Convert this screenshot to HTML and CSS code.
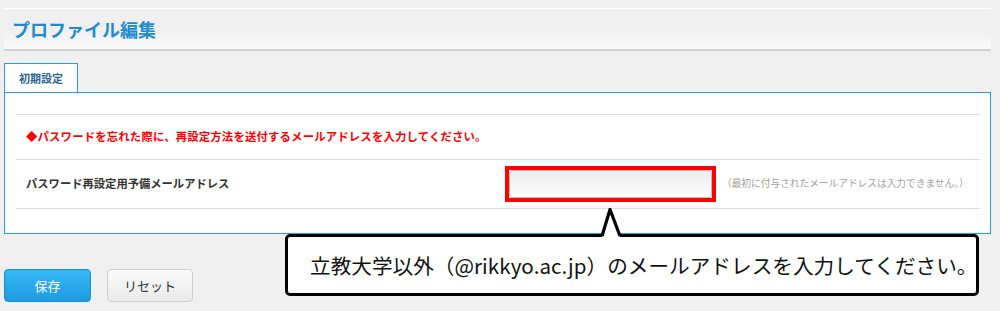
FILE: index.html
```html
<!DOCTYPE html>
<html lang="ja">
<head>
<meta charset="utf-8">
<title>プロファイル編集</title>
<link rel="stylesheet" href="styles.css">
</head>
<body>
<div class="page">
  <div class="header"><h1 class="title">プロファイル編集</h1></div>
  <div class="tabs"><div class="tab">初期設定</div></div>
  <div class="panel">
    <div class="row notice">◆パスワードを忘れた際に、再設定方法を送付するメールアドレスを入力してください。</div>
    <div class="row field">
      <div class="label">パスワード再設定用予備メールアドレス</div>
      <div class="value">
        <span class="highlight"><input class="input" type="text"></span>
        <span class="hint">（最初に付与されたメールアドレスは入力できません。）</span>
      </div>
    </div>
  </div>
  <div class="actions">
    <button class="btn primary" type="button">保存</button>
    <button class="btn secondary" type="button">リセット</button>
  </div>
  <div class="callout">立教大学以外（@rikkyo.ac.jp）のメールアドレスを入力してください。</div>
  <svg class="pointer" width="34" height="40" viewBox="0 0 34 40">
    <polygon points="8,33 16,5 26,33" fill="#fff"/>
    <rect x="9" y="29" width="16" height="5" fill="#fff"/>
    <polyline points="8,32 16,5.5 26,32" fill="none" stroke="#000" stroke-width="3.2" stroke-linejoin="round"/>
  </svg>
</div>
</body>
</html>
```

FILE: styles.css
```css
html, body {
  margin: 0;
  padding: 0;
  background: #f0f0f0;
}
body {
  font-family: "Noto Sans CJK JP", "Noto Sans", sans-serif;
  color: #333;
}
.page {
  position: relative;
  margin: 8px 0 0 4px;
  width: 987px;
}
.header {
  border-top: 1px solid #fff;
  border-bottom: 2px solid #cfcfcf;
  height: 40px;
  background: linear-gradient(to bottom, #f0f0f0 0%, #f0f0f0 55%, #fafafa 100%);
  display: flex;
  align-items: center;
  padding-left: 8px;
}
.title {
  margin: 0;
  font-size: 18px;
  font-weight: bold;
  color: #1e8ad0;
  line-height: 1;
}
.tabs {
  display: flex;
  margin-top: 12px;
}
.tab {
  width: 72px;
  height: 28px;
  border: 1px solid #2b9fdb;
  border-bottom: none;
  background: #fff;
  font-size: 11px;
  font-weight: bold;
  color: #2d6590;
  display: flex;
  align-items: center;
  justify-content: center;
  line-height: 1;
}
.panel {
  border: 1px solid #2b9fdb;
  background: #fff;
  padding: 21px 10px 24px 11px;
}
.row {
  border-top: 1px solid #dedede;
  display: flex;
  align-items: center;
}
.notice {
  height: 44px;
  padding-left: 10px;
  font-size: 11.4px;
  letter-spacing: 0.15px;
  font-weight: bold;
  color: #ff0000;
  line-height: 1;
}
.field {
  height: 48px;
  border-bottom: 1px solid #dedede;
  display: grid;
  grid-template-columns: 489px 1fr;
  align-items: center;
}
.label {
  padding-left: 10px;
  font-size: 11.3px;
  font-weight: bold;
  color: #333;
  line-height: 1;
}
.value {
  display: flex;
  align-items: center;
}
.highlight {
  display: block;
  border: 4px solid #ff0000;
  line-height: 0;
}
.input {
  box-sizing: border-box;
  width: 203px;
  height: 28px;
  margin: 0;
  border: 1px solid #b8b8b8;
  border-radius: 3px;
  background: linear-gradient(to bottom, #ececec 0%, #f6f6f6 60%, #fcfcfc 100%);
  padding: 0 4px;
}
.hint {
  margin-left: 6px;
  font-size: 9.7px;
  color: #a0a0a0;
  line-height: 1;
}
.actions {
  display: flex;
  gap: 16px;
  margin-top: 35px;
}
.btn {
  box-sizing: border-box;
  height: 33px;
  border-radius: 4px;
  font-family: "Noto Sans CJK JP", "Noto Sans", sans-serif;
  font-size: 13px;
  padding: 0;
  line-height: 1;
}
.primary {
  width: 87px;
  border: 1px solid #1c8fd3;
  background: linear-gradient(to bottom, #35b8f6 0%, #1d9be0 100%);
  color: #fff;
}
.secondary {
  width: 86px;
  border: 1px solid #cfcfcf;
  background: linear-gradient(to bottom, #fbfbfb 0%, #e9e9e9 100%);
  color: #333;
}
.callout {
  position: absolute;
  left: 281px;
  top: 226px;
  box-sizing: border-box;
  width: 694px;
  height: 62px;
  border: 3px solid #000;
  border-radius: 5px;
  background: #fff;
  display: flex;
  align-items: center;
  padding-left: 22px;
  font-size: 20.6px;
  letter-spacing: 0.05px;
  color: #111;
  line-height: 1;
  white-space: nowrap;
}
.pointer {
  position: absolute;
  left: 590px;
  top: 196px;
  overflow: visible;
}
```
